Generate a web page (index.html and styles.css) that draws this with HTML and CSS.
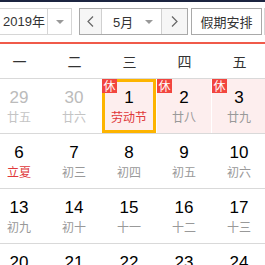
FILE: index.html
```html
<!DOCTYPE html>
<html lang="zh">
<head>
<meta charset="utf-8">
<link rel="stylesheet" href="styles.css">
</head>
<body>
<div class="topline"></div>
<div class="toolbar">
  <div class="sel year">
    <span class="sel-text">2019年</span>
    <span class="sel-arrow"><i class="tri"></i></span>
  </div>
  <div class="sel month">
    <span class="nav prev"><svg width="7" height="11" viewBox="0 0 7 11"><path d="M6 0.5 L1 5.5 L6 10.5" fill="none" stroke="#666" stroke-width="1.2"/></svg></span>
    <span class="mid"><span>5月</span><i class="tri"></i></span>
    <span class="nav next"><svg width="7" height="11" viewBox="0 0 7 11"><path d="M1 0.5 L6 5.5 L1 10.5" fill="none" stroke="#666" stroke-width="1.2"/></svg></span>
  </div>
  <div class="sel holiday">假期安排</div>
  <div class="sel extra"></div>
</div>
<div class="cal">
  <div class="week">
    <span>一</span><span>二</span><span>三</span><span>四</span><span>五</span>
  </div>
  <div class="row">
    <div class="cell other"><div class="num">29</div><div class="lunar">廿五</div></div>
    <div class="cell other"><div class="num">30</div><div class="lunar">廿六</div></div>
    <div class="cell rest today"><span class="badge">休</span><div class="num">1</div><div class="lunar red">劳动节</div></div>
    <div class="cell rest"><span class="badge">休</span><div class="num">2</div><div class="lunar">廿八</div></div>
    <div class="cell rest"><span class="badge">休</span><div class="num">3</div><div class="lunar">廿九</div></div>
  </div>
  <div class="row">
    <div class="cell"><div class="num">6</div><div class="lunar red">立夏</div></div>
    <div class="cell"><div class="num">7</div><div class="lunar">初三</div></div>
    <div class="cell"><div class="num">8</div><div class="lunar">初四</div></div>
    <div class="cell"><div class="num">9</div><div class="lunar">初五</div></div>
    <div class="cell"><div class="num">10</div><div class="lunar">初六</div></div>
  </div>
  <div class="row">
    <div class="cell"><div class="num">13</div><div class="lunar">初九</div></div>
    <div class="cell"><div class="num">14</div><div class="lunar">初十</div></div>
    <div class="cell"><div class="num">15</div><div class="lunar">十一</div></div>
    <div class="cell"><div class="num">16</div><div class="lunar">十二</div></div>
    <div class="cell"><div class="num">17</div><div class="lunar">十三</div></div>
  </div>
  <div class="row">
    <div class="cell"><div class="num">20</div><div class="lunar">十六</div></div>
    <div class="cell"><div class="num">21</div><div class="lunar">小满</div></div>
    <div class="cell"><div class="num">22</div><div class="lunar">十八</div></div>
    <div class="cell"><div class="num">23</div><div class="lunar">十九</div></div>
    <div class="cell"><div class="num">24</div><div class="lunar">二十</div></div>
  </div>
</div>
</body>
</html>
```
FILE: styles.css
```css
html, body {
  margin: 0;
  padding: 0;
}
body {
  width: 265px;
  height: 265px;
  overflow: hidden;
  background: #fff;
  font-family: "Liberation Sans", Arial, "Noto Sans CJK SC", sans-serif;
  color: #333;
}
.topline {
  height: 2px;
  background: #1b2440;
}
.toolbar {
  display: flex;
  margin-top: 6px;
  margin-left: -12px;
  height: 27px;
}
.sel {
  box-sizing: border-box;
  flex: none;
  height: 27px;
  border: 1px solid #a9a9a9;
  display: flex;
  align-items: center;
  font-size: 13px;
  color: #333;
  background: #fff;
}
.year {
  width: 84px;
  border-color: #d6d6d6;
}
.sel-text {
  flex: 1;
  padding-left: 14px;
  line-height: 25px;
}
.sel-arrow {
  box-sizing: border-box;
  width: 24px;
  height: 25px;
  border-left: 1px solid #d6d6d6;
  display: flex;
  align-items: center;
  justify-content: center;
}
.tri {
  display: block;
  width: 0;
  height: 0;
  border-left: 4px solid transparent;
  border-right: 4px solid transparent;
  border-top: 4px solid #999;
}
.month {
  margin-left: 7px;
  width: 109px;
}
.nav {
  box-sizing: border-box;
  height: 25px;
  background: #f6f6f6;
  display: flex;
  align-items: center;
  justify-content: center;
}
.prev {
  width: 22px;
  border-right: 1px solid #d0d0d0;
}
.next {
  width: 26px;
  border-left: 1px solid #d0d0d0;
}
.mid {
  flex: 1;
  display: flex;
  align-items: center;
  padding-left: 11px;
  padding-right: 8px;
}
.mid .tri {
  margin-left: auto;
}
.holiday {
  margin-left: 3px;
  width: 71px;
  justify-content: center;
}
.extra {
  margin-left: 2px;
  width: 60px;
  border-color: #d6d6d6;
}
.cal {
  margin-top: 7px;
  margin-left: -8px;
  width: 275px;
  border-top: 2px solid #f05a4a;
}
.week {
  display: grid;
  grid-template-columns: repeat(5, 55px);
  height: 34px;
  border-bottom: 1px solid #d9d9d9;
  font-size: 14px;
  color: #333;
  font-family: "Noto Sans CJK SC", sans-serif;
}
.week span {
  text-align: center;
  line-height: 34px;
}
.row {
  display: grid;
  grid-template-columns: repeat(5, 55px);
  height: 55px;
  box-sizing: border-box;
  border-bottom: 1px solid #d9d9d9;
}
.cell {
  position: relative;
  box-sizing: border-box;
  border-right: 1px solid #fff;
  text-align: center;
  padding-top: 9px;
}
.num {
  font-size: 17px;
  line-height: 20px;
  color: #000;
}
.lunar {
  margin-top: 1px;
  font-size: 12px;
  line-height: 16px;
  color: #999;
  font-family: "Noto Sans CJK SC", sans-serif;
}
.lunar.red {
  color: #e0383a;
}
.other .num {
  color: #bbb;
}
.other .lunar {
  color: #c4c4c4;
}
.rest {
  background: #fdeeee;
}
.today {
  box-shadow: inset 0 0 0 3px #fdb400;
}
.badge {
  position: absolute;
  top: 0;
  left: 0;
  width: 15px;
  height: 14px;
  background: #f2453f;
  color: #fff;
  font-size: 12px;
  line-height: 14px;
  text-align: center;
  font-family: "Noto Sans CJK SC", sans-serif;
}
```
